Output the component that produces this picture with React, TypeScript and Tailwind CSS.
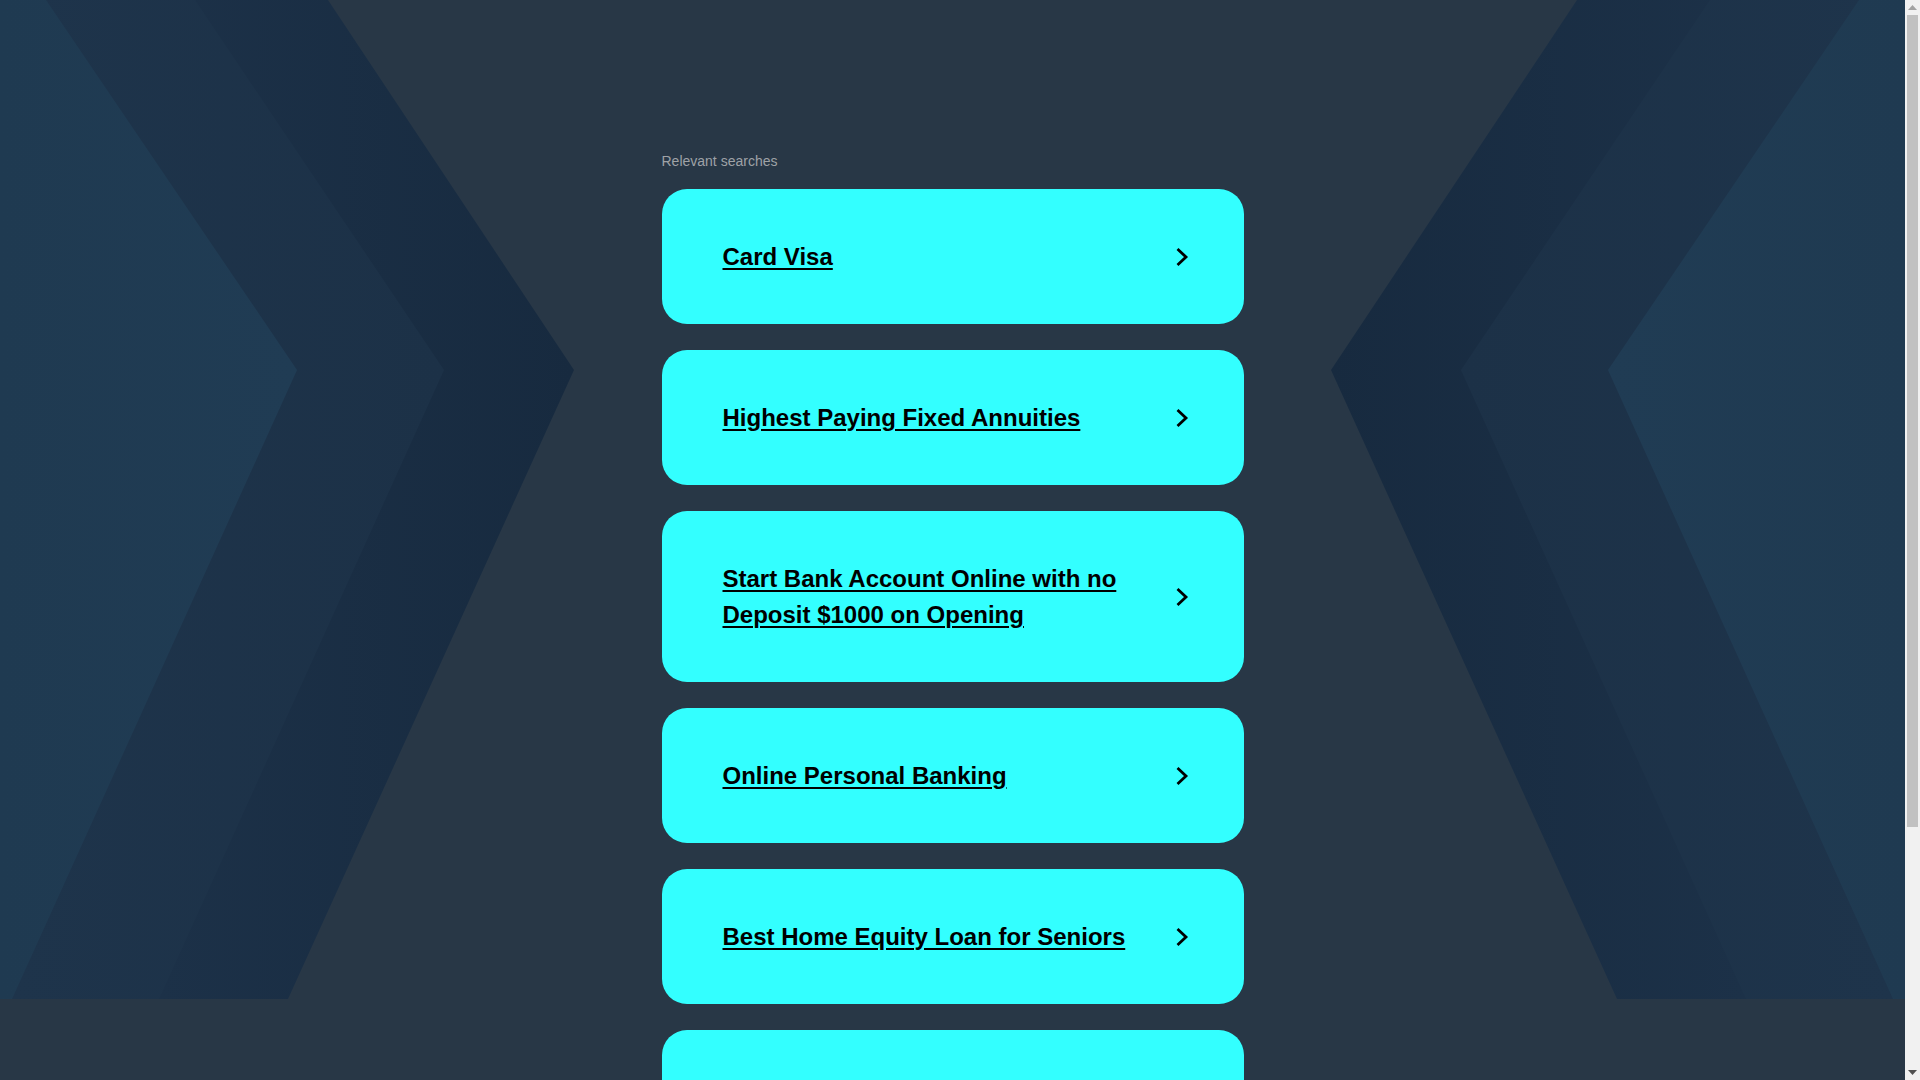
import React from "react";

const items = [
  "Card Visa",
  "Highest Paying Fixed Annuities",
  "Start Bank Account Online with no Deposit $1000 on Opening",
  "Online Personal Banking",
  "Best Home Equity Loan for Seniors",
  "Best Savings Account Rates",
];

function Chevron() {
  return (
    <svg width="24" height="20" viewBox="0 0 24 20" fill="none" aria-hidden="true">
      <path d="M7.5 2 L16 10 L7.5 18" stroke="#000" strokeWidth="2.8" strokeLinejoin="miter" strokeLinecap="butt" />
    </svg>
  );
}

function Background() {
  const bands = (
    <>
      <polygon points="0,0 328,0 574,370 288,999 0,999" fill="url(#gC)" />
      <polygon points="0,0 195,0 444,370 159,999 0,999" fill="url(#gB)" />
      <polygon points="0,0 46,0 297,370 12,999 0,999" fill="url(#gA)" />
    </>
  );
  return (
    <svg
      className="absolute left-0 top-0 w-full h-[999px]"
      viewBox="0 0 1905 999"
      preserveAspectRatio="none"
      aria-hidden="true"
    >
      <defs>
        <linearGradient id="gC" gradientUnits="userSpaceOnUse" x1="160" y1="0" x2="574" y2="0">
          <stop offset="0" stopColor="#1c3148" />
          <stop offset="1" stopColor="#172a3f" />
        </linearGradient>
        <linearGradient id="gB" gradientUnits="userSpaceOnUse" x1="12" y1="0" x2="444" y2="0">
          <stop offset="0" stopColor="#1e344b" />
          <stop offset="1" stopColor="#1c3147" />
        </linearGradient>
        <linearGradient id="gA" gradientUnits="userSpaceOnUse" x1="0" y1="0" x2="297" y2="0">
          <stop offset="0" stopColor="#1f3a51" />
          <stop offset="1" stopColor="#203c54" />
        </linearGradient>
      </defs>
      <g>{bands}</g>
      <g transform="translate(1905,0) scale(-1,1)">{bands}</g>
    </svg>
  );
}

function Scrollbar() {
  return (
    <div className="fixed right-0 top-0 z-10 flex h-screen w-[15px] flex-col bg-[#f1f1f1]">
      <div className="flex h-[15px] items-center justify-center">
        <svg width="9" height="5" viewBox="0 0 9 5" aria-hidden="true">
          <polygon points="0,5 4.5,0 9,5" fill="#a3a3a3" />
        </svg>
      </div>
      <div className="flex-1 px-[2px]">
        <div className="h-[812px] w-full bg-[#c1c1c1]" />
      </div>
      <div className="flex h-[15px] items-center justify-center">
        <svg width="9" height="5" viewBox="0 0 9 5" aria-hidden="true">
          <polygon points="0,0 9,0 4.5,5" fill="#505050" />
        </svg>
      </div>
    </div>
  );
}

export default function App() {
  return (
    <div className="w-full bg-[#283746]" style={{ fontFamily: '"Liberation Sans", Arial, Helvetica, sans-serif' }}>
      <div className="relative min-h-screen w-[calc(100%-15px)] bg-[#283746]">
        <Background />
        <div className="relative mx-auto w-[582px] pt-[153px] pb-[225px]">
          <div className="mb-[20px] text-[14px] leading-[16px] text-[#9fa2a6]">Relevant searches</div>
          <div className="flex flex-col gap-[26px]">
            {items.map((t) => (
              <a
                key={t}
                href="#"
                className="flex items-center rounded-[25px] bg-[#33ffff] pl-[61px] pr-[50px] py-[49.5px] text-black"
              >
                <span className="flex-1 pr-[10px] text-[24px] leading-[36px] font-bold underline decoration-2 underline-offset-[3px]">
                  {t}
                </span>
                <span className="flex w-[24px] shrink-0 items-center justify-center">
                  <Chevron />
                </span>
              </a>
            ))}
          </div>
        </div>
      </div>
      <Scrollbar />
    </div>
  );
}
